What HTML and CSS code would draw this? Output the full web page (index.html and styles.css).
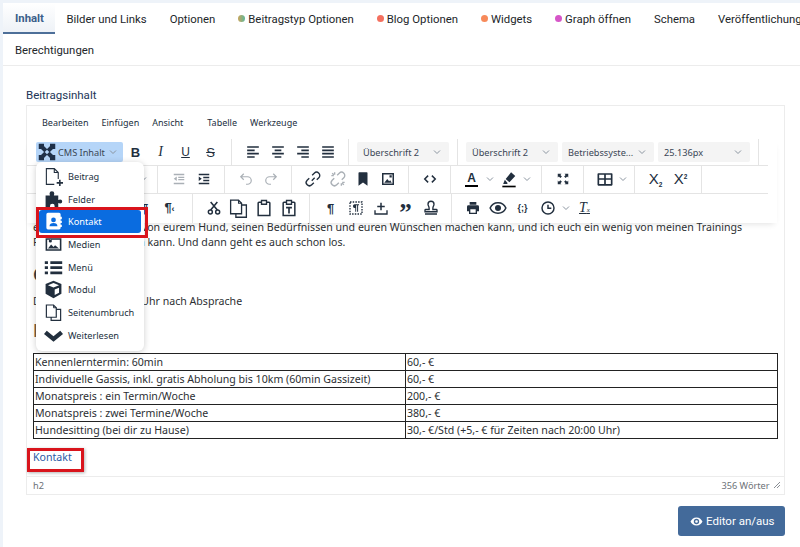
FILE: index.html
```html
<!DOCTYPE html>
<html lang="de">
<head>
    <meta charset="UTF-8">
    <meta name="viewport" content="width=device-width, initial-scale=1.0">
    <title>Beitrag bearbeiten</title>
    <link rel="stylesheet" href="styles.css">
</head>
<body>
<div class="panel">
    <div class="tabs">
        <div class="tab-row">
            <a class="tab active">Inhalt</a>
            <a class="tab">Bilder und Links</a>
            <a class="tab">Optionen</a>
            <a class="tab"><i class="dot green"></i>Beitragstyp Optionen</a>
            <a class="tab"><i class="dot red"></i>Blog Optionen</a>
            <a class="tab"><i class="dot orange"></i>Widgets</a>
            <a class="tab"><i class="dot pink"></i>Graph öffnen</a>
            <a class="tab">Schema</a>
            <a class="tab">Veröffentlichung</a>
        </div>
        <div class="tab-row">
            <a class="tab">Berechtigungen</a>
        </div>
    </div>

    <div class="tab-body">
        <div class="field-label">Beitragsinhalt</div>

        <div class="editor">
            <div class="menubar">
                <span>Bearbeiten</span>
                <span>Einfügen</span>
                <span class="wide">Ansicht</span>
                <span>Tabelle</span>
                <span>Werkzeuge</span>
            </div>

            <div class="toolbar">
                <div class="tb-row">
                    <div class="tb-cms">
                        <svg class="logo" viewBox="0 0 24 24"><path d="M6 6l12 12M18 6L6 18" stroke="#1f3048" stroke-width="5.500" fill="none"/><path d="M1 1h7v4L5 8H1zM23 1h-7v4l3 3h4zM1 23h7v-4l-3-3H1zM23 23h-7v-4l3-3h4z" fill="#1f3048"/><path d="M12 9l3 3-3 3-3-3z" fill="#b5d5f8"/></svg>
                        <span>CMS Inhalt</span>
                        <svg class="chev"><use href="#i-chev"/></svg>
                    </div>
                    <div class="tb-group first-after">
                        <span class="btn txt bold">B</span>
                        <span class="btn txt ital">I</span>
                        <span class="btn txt under">U</span>
                        <span class="btn txt strike">S</span>
                    </div>
                    <div class="tb-group">
                        <span class="btn"><svg class="s20"><use href="#i-left"/></svg></span>
                        <span class="btn"><svg class="s20"><use href="#i-center"/></svg></span>
                        <span class="btn"><svg class="s20"><use href="#i-right"/></svg></span>
                        <span class="btn"><svg class="s20"><use href="#i-justify"/></svg></span>
                    </div>
                    <div class="tb-group">
                        <span class="select">Überschrift 2<svg class="chev"><use href="#i-chev"/></svg></span>
                    </div>
                    <div class="tb-group selects">
                        <span class="select">Überschrift 2<svg class="chev"><use href="#i-chev"/></svg></span>
                        <span class="select">Betriebssyste...<svg class="chev"><use href="#i-chev"/></svg></span>
                        <span class="select">25.136px<svg class="chev"><use href="#i-chev"/></svg></span>
                    </div>
                </div>

                <div class="tb-row">
                    <div class="tb-group lead">
                        <svg class="chev"><use href="#i-chev"/></svg>
                    </div>
                    <div class="tb-group">
                        <span class="btn"><svg class="muted"><use href="#i-outdent"/></svg></span>
                        <span class="btn"><svg><use href="#i-indent"/></svg></span>
                    </div>
                    <div class="tb-group">
                        <span class="btn"><svg class="muted"><use href="#i-undo"/></svg></span>
                        <span class="btn"><svg class="muted"><use href="#i-redo"/></svg></span>
                    </div>
                    <div class="tb-group">
                        <span class="btn"><svg class="s20"><use href="#i-link"/></svg></span>
                        <span class="btn"><svg class="s20 muted"><use href="#i-unlink"/></svg></span>
                        <span class="btn"><svg><use href="#i-bookmark"/></svg></span>
                        <span class="btn"><svg><use href="#i-image"/></svg></span>
                    </div>
                    <div class="tb-group">
                        <span class="btn"><svg><use href="#i-code"/></svg></span>
                    </div>
                    <div class="tb-group">
                        <span class="btn txt color-a">A</span>
                        <svg class="chev split"><use href="#i-chev"/></svg>
                        <span class="btn"><svg class="s20"><use href="#i-marker"/></svg></span>
                        <svg class="chev split"><use href="#i-chev"/></svg>
                    </div>
                    <div class="tb-group">
                        <span class="btn"><svg><use href="#i-full"/></svg></span>
                    </div>
                    <div class="tb-group tight">
                        <span class="btn"><svg class="s20"><use href="#i-table"/></svg></span>
                        <svg class="chev split"><use href="#i-chev"/></svg>
                    </div>
                    <div class="tb-group">
                        <span class="btn txt script">X<sub>2</sub></span>
                        <span class="btn txt script">X<sup>2</sup></span>
                    </div>
                </div>

                <div class="tb-row last">
                    <div class="tb-group lead2">
                        <span class="btn txt pilcrow">¶</span>
                        <span class="btn txt pilcrow inline">¶<small>‹</small></span>
                    </div>
                    <div class="tb-group">
                        <span class="btn"><svg class="s16"><use href="#i-cut"/></svg></span>
                        <span class="btn"><svg class="s21"><use href="#i-copy"/></svg></span>
                        <span class="btn"><svg class="s20"><use href="#i-paste"/></svg></span>
                        <span class="btn"><svg class="s20"><use href="#i-pastetext"/></svg></span>
                    </div>
                    <div class="tb-group">
                        <span class="btn txt pilcrow">¶</span>
                        <span class="btn"><svg><use href="#i-blocks"/></svg></span>
                        <span class="btn"><svg><use href="#i-insert"/></svg></span>
                        <span class="btn txt quote">”</span>
                        <span class="btn"><svg><use href="#i-stamp"/></svg></span>
                    </div>
                    <div class="tb-group plain">
                        <span class="btn"><svg class="s16"><use href="#i-print"/></svg></span>
                        <span class="btn"><svg><use href="#i-eye"/></svg></span>
                        <span class="btn txt braces">{;}</span>
                        <span class="btn"><svg class="s16"><use href="#i-clock"/></svg></span>
                        <svg class="chev split"><use href="#i-chev"/></svg>
                        <span class="btn txt clear-f inline">T<small>x</small></span>
                    </div>
                </div>
            </div>

            <div class="content">
                <p class="intro">einen guten Eindruck von eurem Hund, seinen Bedürfnissen und euren Wünschen machen kann, und ich euch ein wenig von meinen Trainings Programmen erzählen kann. Und dann geht es auch schon los.</p>
                <h2>Coaching</h2>
                <p>Di. - Sa.: 09:00 - 18:00 Uhr nach Absprache</p>
                <h2 class="brown">Preise</h2>
                <table class="prices">
                    <tr><td class="name">Kennenlerntermin: 60min</td><td>60,- €</td></tr>
                    <tr><td class="name">Individuelle Gassis, inkl. gratis Abholung bis 10km (60min Gassizeit)</td><td>60,- €</td></tr>
                    <tr><td class="name">Monatspreis : ein Termin/Woche</td><td>200,- €</td></tr>
                    <tr><td class="name">Monatspreis : zwei Termine/Woche</td><td>380,- €</td></tr>
                    <tr><td class="name">Hundesitting (bei dir zu Hause)</td><td>30,- €/Std (+5,- € für Zeiten nach 20:00 Uhr)</td></tr>
                </table>
                <a class="contact-link">Kontakt</a>
            </div>

            <div class="statusbar">
                <span>h2</span>
                <span class="words">356 Wörter <svg class="grip" viewBox="0 0 8 8"><path d="M7 1L1 7M7 4L4 7" stroke="#8a8f95" fill="none"/></svg></span>
            </div>

            <div class="cms-menu">
                <div class="item"><svg><use href="#i-newdoc"/></svg>Beitrag</div>
                <div class="item"><svg><use href="#i-puzzle"/></svg>Felder</div>
                <div class="item selected"><svg><use href="#i-contact"/></svg>Kontakt</div>
                <div class="item"><svg><use href="#i-image2"/></svg>Medien</div>
                <div class="item"><svg><use href="#i-list"/></svg>Menü</div>
                <div class="item"><svg><use href="#i-cube"/></svg>Modul</div>
                <div class="item"><svg><use href="#i-copy"/></svg>Seitenumbruch</div>
                <div class="item"><svg><use href="#i-bigchev"/></svg>Weiterlesen</div>
                <div class="red-box"></div>
            </div>
        </div>

        <div class="actions">
            <button class="toggle"><svg viewBox="0 0 24 24"><path d="M12 4.500C6.500 4.500 2.500 8.500 1 12c1.500 3.500 5.500 7.500 11 7.500s9.500-4 11-7.500c-1.500-3.500-5.500-7.500-11-7.500zm0 12.500a5 5 0 1 1 0-10 5 5 0 0 1 0 10zm0-7.500a2.500 2.500 0 1 0 0 5 2.500 2.500 0 0 0 0-5z" fill="#fff" fill-rule="evenodd"/></svg>Editor an/aus</button>
        </div>
    </div>
</div>

<svg class="sprite">
    <symbol id="i-chev" viewBox="0 0 10 10"><path d="M2 3.500l3 3 3-3" fill="none" stroke="currentColor" stroke-width="1"/></symbol>
    <symbol id="i-left" viewBox="0 0 24 24"><path d="M5 5h14v2H5zM5 9h9v2H5zM5 13h14v2H5zM5 17h9v2H5z"/></symbol>
    <symbol id="i-center" viewBox="0 0 24 24"><path d="M5 5h14v2H5zM8 9h8v2H8zM5 13h14v2H5zM8 17h8v2H8z"/></symbol>
    <symbol id="i-right" viewBox="0 0 24 24"><path d="M5 5h14v2H5zM10 9h9v2h-9zM5 13h14v2H5zM10 17h9v2h-9z"/></symbol>
    <symbol id="i-justify" viewBox="0 0 24 24"><path d="M5 5h14v2H5zM5 9h14v2H5zM5 13h14v2H5zM5 17h14v2H5z"/></symbol>
    <symbol id="i-outdent" viewBox="0 0 24 24"><path d="M5 5h14v2H5zM11 9h8v1.500h-8zM11 12h8v1.500h-8zM5 17h14v2H5zM9 8.500v6L5 11.500z"/></symbol>
    <symbol id="i-indent" viewBox="0 0 24 24"><path d="M5 5h14v2H5zM11 9h8v2h-8zM11 13h8v2h-8zM5 17h14v2H5zM5 8.500v6l4-3z"/></symbol>
    <symbol id="i-undo" viewBox="0 0 24 24"><path d="M9 5L5 9l4 4M5 9h9a5 5 0 0 1 0 10h-2" fill="none" stroke="currentColor" stroke-width="1.600"/></symbol>
    <symbol id="i-redo" viewBox="0 0 24 24"><path d="M15 5l4 4-4 4M19 9h-9a5 5 0 0 0 0 10h2" fill="none" stroke="currentColor" stroke-width="1.600"/></symbol>
    <symbol id="i-link" viewBox="0 0 24 24"><path d="M10.500 14l3.500-3.500M11 7.500l2.500-2.500a3.500 3.500 0 0 1 5.500 5.500L16.500 13M13 16.500L10.500 19A3.500 3.500 0 0 1 5 13.500L7.500 11" fill="none" stroke="currentColor" stroke-width="1.600"/></symbol>
    <symbol id="i-unlink" viewBox="0 0 24 24"><path d="M11 7.500l2.500-2.500a3.500 3.500 0 0 1 5.500 5.500L16.500 13M13 16.500L10.500 19A3.500 3.500 0 0 1 5 13.500L7.500 11M4 8h3M8 4v3M20 16h-3M16 20v-3M5 5l2 2M19 19l-2-2" fill="none" stroke="currentColor" stroke-width="1.600"/></symbol>
    <symbol id="i-bookmark" viewBox="0 0 24 24"><path d="M7 3h10a1 1 0 0 1 1 1v17l-6-4.500L6 21V4a1 1 0 0 1 1-1z"/></symbol>
    <symbol id="i-image" viewBox="0 0 24 24"><path d="M4 4h16v16H4zm2 2v12h12V6zM7 17l4-5 2.500 3 1.500-1.500 2 3.500zM14 7h3v3h-3z" fill-rule="evenodd"/></symbol>
    <symbol id="i-code" viewBox="0 0 24 24"><path d="M9.500 7.500L5 12l4.500 4.500M14.500 7.500L19 12l-4.500 4.500" fill="none" stroke="currentColor" stroke-width="2"/></symbol>
    <symbol id="i-marker" viewBox="0 0 24 24"><path d="M14.500 4l5 4.500-7 7.500-4.500-4zM7 13l3.500 4-1 1H5z"/><path d="M4 20h16v2H4z" fill="#000"/></symbol>
    <symbol id="i-full" viewBox="0 0 24 24"><path d="M5 5h5L8.500 6.500 10.500 8.500 8.500 10.500 6.500 8.500 5 10zM19 5v5l-1.500-1.500-2 2-2-2 2-2L14 5zM5 19v-5l1.500 1.500 2-2 2 2-2 2L10 19zM19 19h-5l1.500-1.500-2-2 2-2 2 2L19 14z"/></symbol>
    <symbol id="i-table" viewBox="0 0 24 24"><path d="M4 5h16a1 1 0 0 1 1 1v13a1 1 0 0 1-1 1H4a1 1 0 0 1-1-1V6a1 1 0 0 1 1-1zm1 2v4h6V7zm8 0v4h6V7zm-8 6v5h6v-5zm8 0v5h6v-5z" fill-rule="evenodd"/></symbol>
    <symbol id="i-cut" viewBox="0 0 24 24"><path d="M7 3l10 12M17 3L7 15" fill="none" stroke="currentColor" stroke-width="2.400"/><circle cx="6.500" cy="18" r="3" fill="none" stroke="currentColor" stroke-width="2.200"/><circle cx="17.500" cy="18" r="3" fill="none" stroke="currentColor" stroke-width="2.200"/></symbol>
    <symbol id="i-copy" viewBox="0 0 24 24"><path d="M3 2.500h9l3.500 3.500v12H3zM15.500 8H21v14H9v-4" fill="none" stroke="currentColor" stroke-width="1.500"/><path d="M12 2.500V6h3.500" fill="none" stroke="currentColor" stroke-width="1.200"/></symbol>
    <symbol id="i-paste" viewBox="0 0 24 24"><path d="M6 5h12a1 1 0 0 1 1 1v15H5V6a1 1 0 0 1 1-1z" fill="none" stroke="currentColor" stroke-width="1.800"/><path d="M9 3h6v4.500H9z" fill="#fff" stroke="currentColor" stroke-width="1.600"/></symbol>
    <symbol id="i-pastetext" viewBox="0 0 24 24"><path d="M6 5h12a1 1 0 0 1 1 1v15H5V6a1 1 0 0 1 1-1z" fill="none" stroke="currentColor" stroke-width="1.800"/><path d="M9 3h6v4.500H9z" fill="#fff" stroke="currentColor" stroke-width="1.600"/><path d="M8.500 10.500h7v2h-2.500v6h-2v-6H8.500z"/></symbol>
    <symbol id="i-blocks" viewBox="0 0 24 24"><path d="M10 7h6v1.300h-1.200V17h-1.300V8.300h-1.300V17H11v-5a2.500 2.500 0 0 1-1-5z"/><path d="M4 4h16v16H4z" fill="none" stroke="currentColor" stroke-width="1.800" stroke-dasharray="2 1.600"/></symbol>
    <symbol id="i-insert" viewBox="0 0 24 24"><path d="M4 15v5h16v-5" fill="none" stroke="currentColor" stroke-width="1.800"/><path d="M11 5h2v4h4v2h-4v4h-2v-4H7V9h4z"/></symbol>
    <symbol id="i-stamp" viewBox="0 0 24 24"><path d="M12 3a4 4 0 0 0-4 4c0 2 1.500 3 1.500 5.500V14H5a1 1 0 0 0-1 1v2h16v-2a1 1 0 0 0-1-1h-4.500v-1.500C14.500 10 16 9 16 7a4 4 0 0 0-4-4z" fill="none" stroke="currentColor" stroke-width="1.800"/><path d="M4 19h16v2H4z"/></symbol>
    <symbol id="i-print" viewBox="0 0 24 24"><path d="M7 3h10v4H7zM5 8h14a2 2 0 0 1 2 2v7h-3v4H6v-4H3v-7a2 2 0 0 1 2-2zm3 6v5h8v-5z" fill-rule="evenodd"/></symbol>
    <symbol id="i-eye" viewBox="0 0 24 24"><path d="M12 5C7 5 3 8.500 1.500 12 3 15.500 7 19 12 19s9-3.500 10.500-7C21 8.500 17 5 12 5z" fill="none" stroke="currentColor" stroke-width="2"/><circle cx="12" cy="12" r="4"/></symbol>
    <symbol id="i-clock" viewBox="0 0 24 24"><circle cx="12" cy="12" r="9" fill="none" stroke="currentColor" stroke-width="2.200"/><path d="M12 7v5.500h5" fill="none" stroke="currentColor" stroke-width="2.200"/></symbol>
    <symbol id="i-newdoc" viewBox="0 0 24 24"><path d="M13 22H3V2h10l5 5v8M13 2v5h5" fill="none" stroke="currentColor" stroke-width="1.400"/><path d="M19 16h2v3h3v2h-3v3h-2v-3h-3v-2h3z"/></symbol>
    <symbol id="i-puzzle" viewBox="0 0 24 24"><path d="M10 1.500a3 3 0 0 1 3 3c0 1-.5 1.500-.5 2.500H18v5.500c1 0 1.500-.5 2.500-.5a2.500 2.500 0 0 1 0 5c-1 0-1.500-.5-2.500-.5V23h-5c0-1 .5-1.500.5-2.500a3 3 0 0 0-6 0c0 1 .5 1.500.5 2.500H2V7h5.500C7.500 6 7 5.500 7 4.500a3 3 0 0 1 3-3z"/></symbol>
    <symbol id="i-contact" viewBox="0 0 24 24"><path d="M5 1h14a2 2 0 0 1 2 2v3h1.500v3H21v2h1.500v3H21v2h1.500v3H21v1a2 2 0 0 1-2 2H5a2 2 0 0 1-2-2V3a2 2 0 0 1 2-2zm7 6a3 3 0 1 0 0 6 3 3 0 0 0 0-6zm-5 11h10c0-2.500-2-4-5-4s-5 1.500-5 4z" fill-rule="evenodd"/></symbol>
    <symbol id="i-image2" viewBox="0 0 24 24"><path d="M2 4h20v16H2zm2 2v12h16V6zm1 11l4-5 3 3 2-2 5 4zM6 7.500a2 2 0 1 0 4 0 2 2 0 0 0-4 0z" fill-rule="evenodd"/></symbol>
    <symbol id="i-list" viewBox="0 0 24 24"><path d="M1 4h4v3.500H1zM8 4h15v3.500H8zM1 10.500h4V14H1zM8 10.500h15V14H8zM1 17h4v3.500H1zM8 17h15v3.500H8z"/></symbol>
    <symbol id="i-cube" viewBox="0 0 24 24"><path d="M12 1l10 4v12.500L12 23 2 17.500V5zM5 6.500l7 3 7-3-7-2.700zM13.500 12v7l5.500-3v-6.300z" fill-rule="evenodd"/></symbol>
    <symbol id="i-bigchev" viewBox="0 0 24 24"><path d="M3.500 6L12 13l8.500-7L24 10l-12 10L0 10z"/></symbol>
</svg>
</body>
</html>
```

FILE: styles.css
```css
* {
    box-sizing: border-box;
}

html, body {
    height: 100%;
    overflow: hidden;
}

body {
    margin: 0;
    padding: 3px 0 0 3px;
    background-color: #eef3f9;
    font-family: Roboto, sans-serif;
    color: #22262a;
}

.sprite {
    display: none;
}

.panel {
    background-color: #fff;
    height: 100%;
    overflow: hidden;
}

/* tabs */
.tabs {
    border-bottom: 1px solid #ececec;
}

.tab-row {
    display: flex;
    height: 31px;
}

.tab {
    flex-shrink: 0;
    display: flex;
    align-items: center;
    padding: 0 11.500px;
    font-size: 11.350px;
    white-space: nowrap;
}

.tab.active {
    width: 52px;
    padding: 0 12px;
    color: #3b5f8a;
    font-weight: 700;
    background: linear-gradient(#fff, #eef2f7);
    border-bottom: 2px solid #4d6f99;
}

.dot {
    width: 7px;
    height: 7px;
    border-radius: 50%;
    margin-right: 3px;
}

.dot.green { background: linear-gradient(90deg, #c9a55c, #5fb89a); }
.dot.red { background-color: #f4705f; }
.dot.orange { background-color: #f78a5a; }
.dot.pink { background-color: #d656c8; }

.tab-row + .tab-row .tab {
    padding: 0 12px;
}

.tab-body {
    padding: 22px 15px 0 23px;
}

.field-label {
    font-size: 11.500px;
    line-height: 14px;
    color: #1d3557;
    margin-bottom: 3px;
}

/* editor */
.editor {
    position: relative;
    height: 390px;
    border: 1px solid #ececec;
    display: flex;
    flex-direction: column;
    font-family: "Noto Sans", sans-serif;
}

.menubar {
    display: flex;
    gap: 13px;
    height: 33px;
    flex-shrink: 0;
    align-items: center;
    padding: 0 0 0 15px;
    font-size: 9px;
    color: #222f3e;
}

.menubar .wide {
    margin-right: 11px;
}

.toolbar {
    position: relative;
    z-index: 1;
    background-color: #fff;
    color: #222f3e;
    box-shadow: 0 4px 6px -3px rgba(0, 0, 0, .12);
    width: 750px;
}

.tb-row {
    display: flex;
    height: 28px;
    width: 741px;
    border-bottom: 1px solid #e4e4e4;
    padding-left: 9px;
}

.tb-row:first-child {
    height: 27px;
    align-items: center;
}

.tb-row.last {
    height: 29px;
    border-bottom: 0;
}

.tb-cms {
    display: flex;
    align-items: center;
    height: 20px;
    width: 87px;
    padding-left: 2px;
    background-color: #b5d5f8;
    border-radius: 2px;
    font-size: 9.200px;
    color: #3a4654;
}

.logo {
    width: 18px;
    height: 18px;
    margin-right: 2px;
    flex-shrink: 0;
}

.tb-group {
    display: flex;
    align-items: center;
    padding: 0 8px 1px;
    border-right: 1px solid #e4e4e4;
    height: 100%;
}

.tb-row:first-child .tb-group {
    padding-bottom: 0;
}

.tb-group.first-after {
    padding-left: 0;
}

.tb-group.lead {
    width: 122px;
    justify-content: flex-end;
    padding-right: 9px;
}

.tb-group.lead2 {
    width: 157px;
    justify-content: flex-end;
    padding-right: 10px;
}

.tb-group.tight {
    padding-right: 5px;
}

.tb-group.plain {
    border-right: 0;
}

.tb-group.selects {
    gap: 4px;
}

.btn {
    width: 25px;
    height: 20px;
    display: flex;
    align-items: center;
    justify-content: center;
    fill: currentColor;
    flex-shrink: 0;
}

.btn svg {
    width: 18px;
    height: 18px;
}

.btn svg.s16 {
    width: 16px;
    height: 16px;
}

.btn svg.s20 {
    width: 20px;
    height: 20px;
}

.btn svg.s21 {
    width: 21px;
    height: 21px;
}

.btn .muted {
    color: #aab0b6;
    fill: #aab0b6;
}

.chev {
    width: 10px;
    height: 10px;
    color: #8b95a0;
    flex-shrink: 0;
}

.tb-cms .chev {
    margin-left: 3px;
}

.chev.split {
    width: 12px;
}

.select {
    width: 92px;
    height: 20px;
    display: flex;
    align-items: center;
    justify-content: space-between;
    padding: 0 7px 0 6px;
    background-color: #f4f4f4;
    border-radius: 2px;
    font-size: 9.200px;
    color: #3a4654;
}

.txt {
    font-family: "Liberation Sans", sans-serif;
    font-size: 13px;
}

.btn.inline {
    display: block;
    text-align: center;
    line-height: 20px;
}

.btn.script {
    display: block;
    text-align: center;
    line-height: 20px;
    font-size: 15px;
}

.bold { font-weight: 700; }
.ital { font-family: "Liberation Serif", serif; font-style: italic; font-size: 14px; }
.under { text-decoration: underline; font-size: 12px; }
.strike { text-decoration: line-through; font-size: 13px; }
.color-a { font-weight: 700; font-size: 12px; border-bottom: 2px solid #000; width: 13px; height: 15px; margin: 0 6px; line-height: 13px; }
.script sub, .script sup { font-size: 6.500px; font-weight: 700; line-height: 0; }
.script sub { vertical-align: -3px; }
.script sup { vertical-align: 5px; }
.pilcrow { font-weight: 700; font-size: 13px; }
.pilcrow small { font-size: 9px; }
.quote { font-family: "Liberation Serif", serif; font-size: 25px; font-weight: 700; padding-top: 10px; }
.braces { font-size: 9px; font-weight: 700; }
.clear-f { font-family: "Liberation Serif", serif; font-style: italic; font-size: 14px; text-decoration: underline; }
.clear-f small { font-size: 7px; }

.content {
    flex: 1;
    padding: 0 6px;
    font-size: 10.600px;
    line-height: 15px;
    color: #2c2f33;
}

.content p {
    margin: 0;
}

.content .intro {
    margin-top: -3px;
    width: 716px;
}

.content h2 {
    margin: 12px 0 8px;
    font-size: 18px;
    line-height: 24px;
    color: #3c3f42;
}

.content h2.brown {
    margin: 9px 0 11px;
    color: #7a5c45;
}

.prices {
    border-collapse: collapse;
    width: 745px;
    table-layout: fixed;
}

.prices td {
    border: 1px solid #222;
    padding: 0 1px;
    height: 17px;
    line-height: 15px;
}

.prices .name {
    width: 372px;
}

.contact-link {
    display: inline-block;
    margin: 9px 0 0 -6px;
    padding: 0 0 0 3px;
    width: 57px;
    height: 24px;
    line-height: 13px;
    border: 3px solid #d9141c;
    box-shadow: 1px 1px 3px rgba(0, 0, 0, .3);
    color: #2a5aa5;
}

.statusbar {
    height: 18px;
    flex-shrink: 0;
    display: flex;
    justify-content: space-between;
    align-items: center;
    padding: 0 3px 0 6px;
    border-top: 1px solid #ececec;
    font-size: 9.200px;
    color: #6d7278;
}

.grip {
    width: 8px;
    height: 8px;
    margin-left: 1px;
}

/* CMS Inhalt dropdown */
.cms-menu {
    position: absolute;
    z-index: 2;
    top: 56px;
    left: 9px;
    width: 108px;
    height: 189px;
    padding: 3px;
    background-color: #fff;
    border-radius: 6px;
    box-shadow: 0 1px 6px rgba(0, 0, 0, .2);
    color: #222f3e;
    font-size: 9.200px;
}

.item {
    display: flex;
    align-items: center;
    height: 22.700px;
    padding-left: 5px;
    border-radius: 3px;
    fill: currentColor;
}

.item svg {
    width: 19px;
    height: 19px;
    margin-right: 5px;
    flex-shrink: 0;
}

.item.selected {
    background-color: #0a6ce0;
    color: #fff;
}

.red-box {
    position: absolute;
    top: 45px;
    left: 0;
    width: 112px;
    height: 31px;
    border: 3px solid #d9141c;
}

/* bottom button */
.actions {
    display: flex;
    justify-content: flex-end;
    margin-top: 11px;
}

.toggle {
    display: flex;
    align-items: center;
    gap: 3px;
    width: 107px;
    height: 30px;
    padding: 0 0 0 12px;
    background-color: #436a9a;
    border: 0;
    border-radius: 3px;
    color: #fff;
    font-family: Roboto, sans-serif;
    font-size: 11.500px;
}

.toggle svg {
    width: 13px;
    height: 13px;
}
```
